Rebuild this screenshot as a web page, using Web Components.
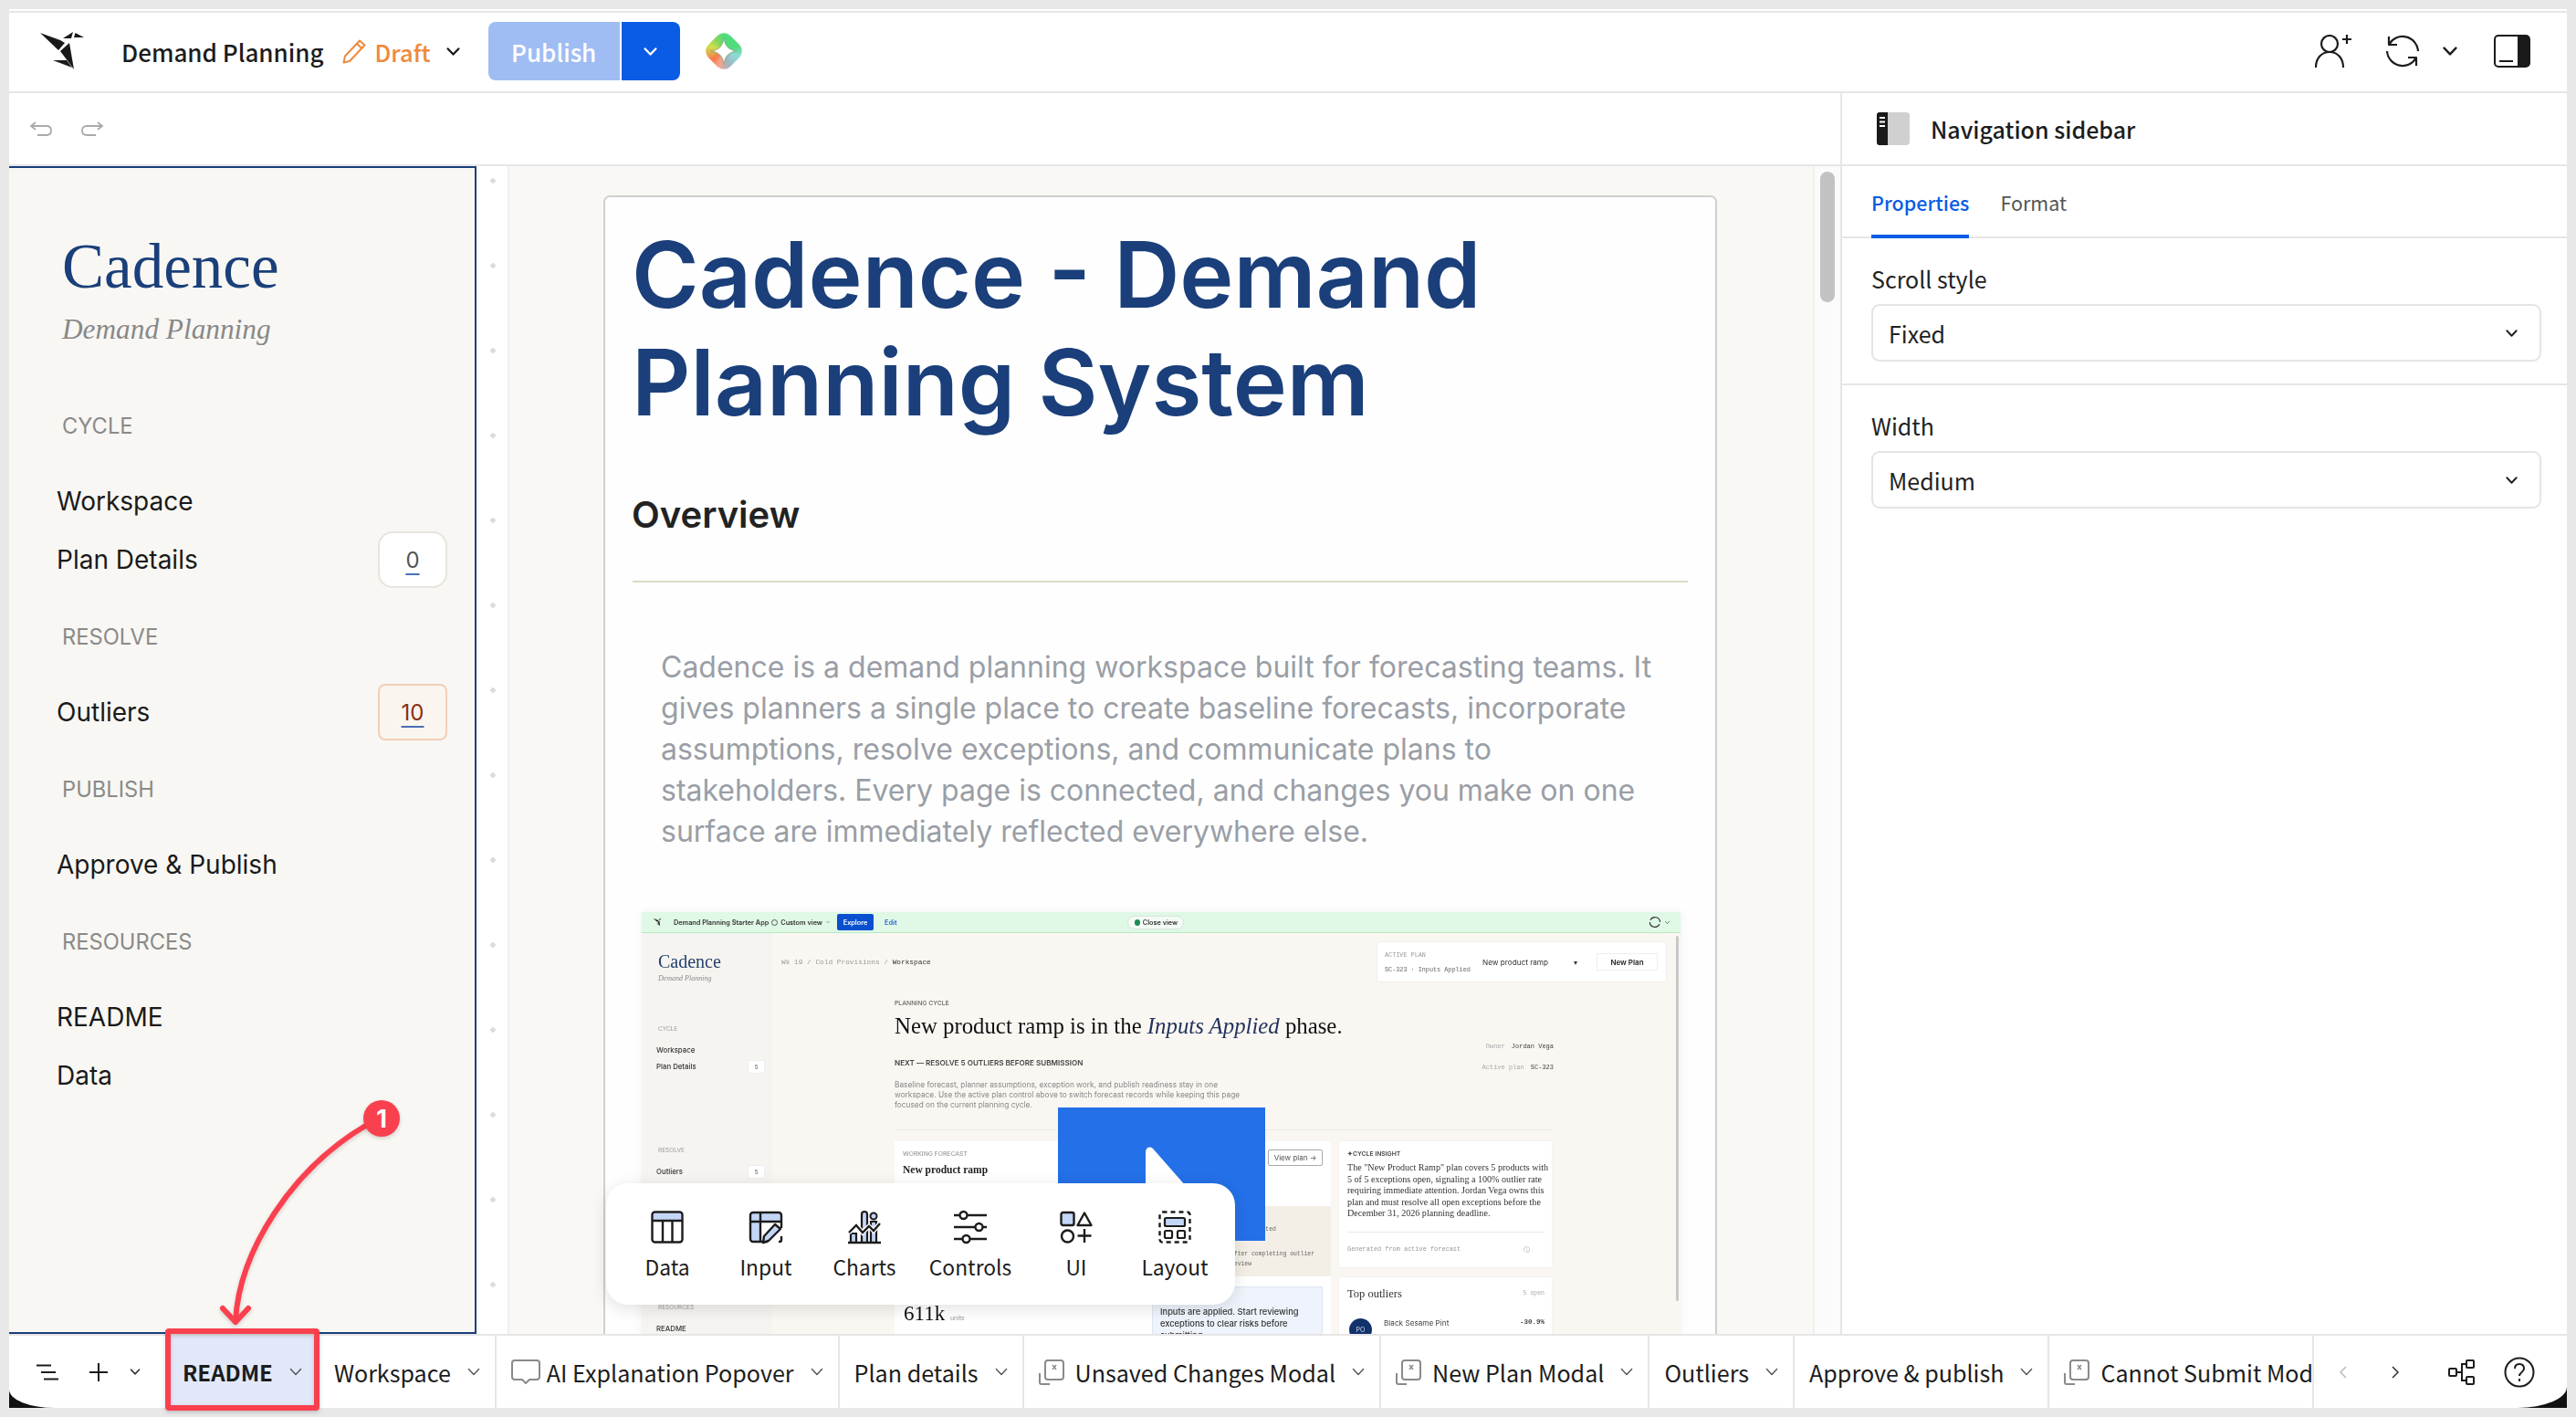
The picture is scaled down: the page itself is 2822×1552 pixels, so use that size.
<!DOCTYPE html>
<html>
<head>
<meta charset="utf-8">
<title>Demand Planning</title>
<style>
  html, body { margin: 0; height: 100%; }
  body {
    position: relative;
    width: 2822px;
    height: 1552px;
    overflow: hidden;
    background: #e8e8e8;
    font-family: "Noto Sans CJK SC", "Liberation Sans", sans-serif;
    color: #1c1c1c;
  }
  .frame { position: absolute; inset: 10px 10px 10px 10px; display: flex; flex-direction: column; }
  .work { flex: 1; display: flex; min-height: 0; }
  .left { width: 2006px; display: flex; flex-direction: column; border-right: 2px solid #e6e6e6; flex: none; }
</style>
</head>
<body>
<div class="frame">
  <top-bar></top-bar>
  <div class="work">
    <div class="left">
      <edit-toolbar></edit-toolbar>
      <work-canvas>
        <cadence-sidebar slot="sidebar">
          <nav-section label="CYCLE">
            <nav-item>Workspace</nav-item>
            <nav-item count="0">Plan Details</nav-item>
          </nav-section>
          <nav-section label="RESOLVE">
            <nav-item count="10" tone="warn">Outliers</nav-item>
          </nav-section>
          <nav-section label="PUBLISH">
            <nav-item>Approve &amp; Publish</nav-item>
          </nav-section>
          <nav-section label="RESOURCES">
            <nav-item>README</nav-item>
            <nav-item>Data</nav-item>
          </nav-section>
        </cadence-sidebar>
        <doc-page></doc-page>
        <element-toolbar slot="float"></element-toolbar>
      </work-canvas>
    </div>
    <prop-panel></prop-panel>
  </div>
  <page-bar></page-bar>
</div>
<tour-annotation></tour-annotation>

<script>
  const chevron = (w, c = '#1c1c1c', sw = 1.4) =>
    `<svg width="${w}" height="${Math.round(w * 0.62)}" viewBox="0 0 10 6.2" fill="none" stroke="${c}" stroke-width="${sw}" stroke-linecap="round" stroke-linejoin="round"><path d="M1 1l4 4.2L9 1"/></svg>`;

  function define(tag, render) {
    customElements.define(tag, class extends HTMLElement {
      connectedCallback() {
        if (this.shadowRoot) return;
        this.attachShadow({ mode: 'open' }).innerHTML = render(this);
      }
    });
  }

  define('top-bar', () => `
    <style>
      :host { display: flex; align-items: center; height: 88px; box-sizing: content-box; flex: none;
        background: #fff; border-top: 2px solid #fff; box-shadow: inset 0 2px 0 #e6e6e6; border-bottom: 2px solid #e6e6e6; padding-left: 26px; padding-right: 40px; }
      .logo { flex: none; width: 66px; height: 54px; }
      .title { font-size: 26px; font-weight: 500; margin-left: 31px; color: #1c1c1c; }
      .pencil { margin-left: 19px; flex: none; }
      .draft { font-size: 25.5px; font-weight: 500; color: #ee8a3c; margin-left: 9px; }
      .caret { margin-left: 17px; display: flex; }
      .publish { display: flex; height: 64px; margin-left: 31px; border-radius: 8px; overflow: hidden; }
      .publish b { width: 144px; background: #9fbdf3; color: #fff; font-weight: 500; font-size: 26px; display: flex; align-items: center; justify-content: center; }
      .publish i { width: 64px; margin-left: 2px; background: #0a5ce4; display: flex; align-items: center; justify-content: center; }
      .spark { position: relative; width: 40px; height: 40px; margin-left: 28px; flex: none; }
      .spark:before { content: ""; position: absolute; left: 3px; top: 3px; width: 34px; height: 34px; border-radius: 10px; transform: rotate(45deg);
        background: conic-gradient(from -45deg, #4fdc7c 0 20%, #8fdcd6 30%, #9fb4c4 45%, #f7a58a 55%, #f7784c 65%, #cfe04c 80%, #8bd65c 90%, #4fdc7c); filter: blur(.6px); }
      .spark svg { position: absolute; inset: 0; }
      .right { margin-left: auto; display: flex; align-items: center; }
    </style>
    <svg class="logo" viewBox="0 0 66 54" fill="#1a1a1a">
      <polygon points="8,7 30,15 35,18 28,26"/>
      <polygon points="30,27 40,18 45,47"/>
      <polygon points="33,13 44,6 42,13"/>
      <polygon points="46.5,7 56,12 45,12"/>
      <polygon points="22,37 37,37 43,45"/>
    </svg>
    <span class="title">Demand Planning</span>
    <svg class="pencil" width="28" height="28" viewBox="0 0 28 28" fill="none" stroke="#ee8a3c" stroke-width="2" stroke-linejoin="round"><path d="M20 2.500l5.500 5L9 25 2.500 26.500 4 19.500z"/><path d="M17 6l5.500 5"/></svg>
    <span class="draft">Draft</span>
    <span class="caret">${chevron(15, '#1c1c1c', 1.6)}</span>
    <div class="publish"><b>Publish</b><i>${chevron(15, '#fff', 1.6)}</i></div>
    <div class="spark"><svg viewBox="0 0 40 40"><path d="M20 5.500C21 14 26 19 34 20 26 21 21 26 20 34.500 19 26 14 21 6 20 14 19 19 14 20 5.500Z" fill="#fff" stroke="#6d8a5a" stroke-opacity=".45" stroke-width="1.500"/></svg></div>
    <div class="right">
      <svg width="40" height="36" viewBox="0 0 40 36" fill="none" stroke="#1c1c1c" stroke-width="2.200"><circle cx="16" cy="10" r="9"/><path d="M1 36c0-10 6-17 15-17s15 7 15 17"/><path d="M30 5h10M35 0v10"/></svg>
      <svg style="margin-left:38px" width="36" height="36" viewBox="0 0 36 36" fill="none" stroke="#1c1c1c" stroke-width="2.200" stroke-linejoin="round"><path d="M3 11A17 17 0 0 1 35 18"/><path d="M33 25A17 17 0 0 1 1 18"/><path d="M3 2v9h9"/><path d="M33 34v-9h-9"/></svg>
      <span style="margin-left:26px;display:flex">${chevron(16, '#1c1c1c', 1.500)}</span>
      <svg style="margin-left:40px" width="40" height="36" viewBox="0 0 40 36"><rect x="1" y="1" width="38" height="34" rx="4" fill="#fff" stroke="#1a1a1a" stroke-width="2"/><path d="M26 1h9a4 4 0 0 1 4 4v26a4 4 0 0 1-4 4h-9z" fill="#1a1a1a"/><path d="M6 29h15" stroke="#1a1a1a" stroke-width="2"/></svg>
    </div>`);

  define('edit-toolbar', () => `
    <style>
      :host { display: flex; align-items: center; gap: 30px; height: 78px; flex: none; background: #fff; border-bottom: 2px solid #e6e6e6; padding-left: 22px; }
      svg { display: block; }
    </style>
    <svg width="26" height="16" viewBox="0 0 26 16" fill="none" stroke="#aaa" stroke-width="1.800"><path d="M7 1L2 5l5 4"/><path d="M2 5h17c3.500 0 5 2 5 5s-1.500 5-5 5H9"/></svg>
    <svg width="26" height="16" viewBox="0 0 26 16" fill="none" stroke="#aaa" stroke-width="1.800"><path d="M19 1l5 4-5 4"/><path d="M24 5H7c-3.500 0-5 2-5 5s1.500 5 5 5h10"/></svg>`);

  define('work-canvas', () => `
    <style>
      :host { display: block; flex: 1; min-height: 0; }
      .row { position: relative; display: flex; height: 100%; }
      .dots { width: 34px; flex: none; background: #fff radial-gradient(circle at 18px 16px, #dcdcdc 2.5px, transparent 3px) 0 0 / 34px 93px repeat-y; border-right: 2px solid #efefef; }
      .canvas { width: 1428px; flex: none; overflow: hidden; background: #f9f8f4; }
      .track { flex: 1; background: #fbfbfb; border-left: 2px solid #efefef; padding: 6px 6px 0; box-sizing: border-box; }
      .thumb { height: 143px; border-radius: 8px; background: #c2c2c2; }
      .float { position: absolute; left: 654px; bottom: 32px; }
    </style>
    <div class="row">
      <slot name="sidebar"></slot>
      <div class="dots"></div>
      <div class="canvas"><slot></slot></div>
      <div class="track"><div class="thumb"></div></div>
      <div class="float"><slot name="float"></slot></div>
    </div>`);

  define('cadence-sidebar', () => `
    <style>
      :host { display: block; width: 512px; flex: none; box-sizing: border-box; background: #f8f7f3;
        border: solid #1a3f7a; border-width: 2px 2px 2px 0; padding: 68px 30px 0 52px; }
      h1 { margin: 0 0 0 6px; font: 400 69px/80px "Liberation Serif", serif; color: #1a3f7a; }
      p { margin: 9px 0 66px 6px; font: italic 400 31.300px/40px "Liberation Serif", serif; color: #888; }
    </style>
    <h1>Cadence</h1>
    <p>Demand Planning</p>
    <slot></slot>`);

  define('nav-section', (el) => `
    <style>
      :host { display: block; }
      .label { margin: 33px 0 30px 6px; font: 400 23.700px/40px Inter, sans-serif; color: #8a8a8a; }
    </style>
    <div class="label">${el.getAttribute('label')}</div>
    <slot></slot>`);

  define('nav-item', (el) => {
    const count = el.getAttribute('count');
    const warn = el.getAttribute('tone') === 'warn';
    return `
    <style>
      :host { display: flex; align-items: center; justify-content: space-between; height: 64px; font: 400 28px Inter, sans-serif; color: #1a1a1a; }
      .badge { width: 76px; height: 62px; box-sizing: border-box; display: flex; align-items: center; justify-content: center; font-size: 24px;
        background: ${warn ? '#fbf5ef' : '#fff'}; color: ${warn ? '#8a2f10' : '#555'}; border: 2px solid ${warn ? '#f2cfb8' : '#e8e4de'}; border-radius: ${warn ? 8 : 16}px; }
      .badge span { text-decoration: underline; text-decoration-color: #4a6fb5; text-underline-offset: 6px; text-decoration-thickness: 2px; }
    </style>
    <slot></slot>
    ${count !== null ? `<div class="badge"><span>${count}</span></div>` : ''}`;
  });

  define('doc-page', () => `
    <style>
      :host { display: block; margin: 32px 0 0 103px; width: 1220px; height: 1400px; box-sizing: border-box; background: #fefefe; border: 2px solid #cfcfcf; border-radius: 7px; padding-left: 30px; overflow: hidden; }
      h1 { margin: 26px 0 0 -1px; font: 600 100px/118px Inter, sans-serif; color: #1a3f7a; }
      h2 { margin: 64px 0 0 -1px; font: 600 40px/44px Inter, sans-serif; color: #222; }
      hr { margin: 50px 30px 0 0; border: 0; height: 2px; background: #dcdac6; }
      p { margin: 70px 60px 0 31px; font: 400 32px/45px Inter, sans-serif; color: #9a9ea6; }
      video-thumb { margin: 66px 0 0 10px; }
    </style>
    <h1>Cadence - Demand<br>Planning System</h1>
    <h2>Overview</h2>
    <hr>
    <p>Cadence is a demand planning workspace built for forecasting teams. It gives planners a single place to create baseline forecasts, incorporate assumptions, resolve exceptions, and communicate plans to stakeholders. Every page is connected, and changes you make on one surface are immediately reflected everywhere else.</p>
    <video-thumb></video-thumb>`);

  define('video-thumb', () => `
    <style>
      :host { display: block; position: relative; width: 1138px; height: 470px; box-shadow: 0 0 10px rgba(0,0,0,.06); font: 400 8px Inter, sans-serif; color: #333; }
      .shot { filter: blur(.35px); height: 100%; display: flex; flex-direction: column; }
      .mono { font-family: "Liberation Mono", monospace; }
      .serif { font-family: "Liberation Serif", serif; }
      .bar { height: 22px; flex: none; display: flex; align-items: center; background: #e0f8e6; border-bottom: 1.5px solid #b5e8c2; padding-left: 12px; font-weight: 600; font-size: 7.3px; }
      .bar .ex { margin-left: 8px; width: 40px; height: 18px; background: #0a4fd0; color: #fff; border-radius: 2px; display: flex; align-items: center; justify-content: center; }
      .bar .ed { margin-left: 12px; color: #2a66d0; }
      .bar .close { margin-left: 253px; height: 15px; width: 62px; border-radius: 8px; background: #f4fbf5; border: 1px solid #d6e6da; box-sizing: border-box; display: flex; align-items: center; justify-content: center; gap: 3px; }
      .bar .close i { width: 6px; height: 7px; border-radius: 3px; background: #1f8a55; }
      .bar .sync { margin-left: auto; margin-right: 12px; display: flex; align-items: center; gap: 5px; }
      .body { flex: 1; display: flex; background: #faf7f3; min-height: 0; }
      aside { width: 143px; flex: none; background: #f6f4f0; padding: 20px 0 0 16px; box-sizing: border-box; }
      aside .c { font: 400 20px/22px "Liberation Serif", serif; color: #24406f; margin-left: 2px; }
      aside .s { font: italic 400 8px/12px "Liberation Serif", serif; color: #888; margin: 2px 0 0 2px; }
      aside .l { color: #999; font-size: 6.500px; line-height: 10px; margin-left: 2px; }
      aside .i { height: 18px; line-height: 18px; font-weight: 500; font-size: 7.800px; display: flex; justify-content: space-between; align-items: center; padding-right: 8px; }
      aside .n { width: 19px; height: 15px; background: #fff; border: 1px solid #eee; box-sizing: border-box; border-radius: 2px; text-align: center; line-height: 13px; font-size: 6px; color: #666; }
      main { flex: 1; min-width: 0; position: relative; }
      .head { display: flex; justify-content: space-between; align-items: flex-start; padding: 10px 16px 0 10px; height: 43px; }
      .crumb { margin-top: 17px; color: #999; font-size: 7.800px; line-height: 10px; }
      .crumb b { color: #333; font-weight: 400; }
      .plan { width: 316px; height: 43px; box-sizing: border-box; background: #fff; box-shadow: 0 0 2px rgba(0,0,0,.12); border-radius: 2px; display: flex; align-items: center; padding: 0 9px 0 8px; }
      .plan .a { width: 107px; font-size: 6.800px; line-height: 16px; color: #666; }
      .plan .a div:first-child { color: #999; }
      .plan .sel { width: 125px; font-size: 8.200px; display: flex; justify-content: space-between; padding-right: 21px; box-sizing: border-box; }
      .plan .btn { width: 67px; height: 19px; border: 1px solid #eee; box-sizing: border-box; display: flex; align-items: center; justify-content: center; font-weight: 600; font-size: 8px; color: #222; }
      .content { margin: 19px 0 0 134px; width: 722px; }
      .hero { display: flex; justify-content: space-between; height: 143px; border-bottom: 1px solid #efece6; }
      .eyebrow { font-size: 6.800px; line-height: 10px; font-weight: 500; color: #666; }
      .headline { font: 400 24.800px/28px "Liberation Serif", serif; color: #111; margin-top: 6px; white-space: nowrap; }
      .headline em { color: #22335c; }
      .next { margin-top: 20px; font-size: 8.100px; line-height: 12px; font-weight: 600; color: #444; white-space: nowrap; }
      .desc { margin-top: 13px; font-size: 8.300px; line-height: 11px; color: #888; white-space: nowrap; }
      .meta { padding-top: 47px; text-align: right; font-size: 7px; line-height: 10px; color: #444; }
      .meta span { color: #aaa; margin-right: 7px; }
      .meta div + div { margin-top: 13px; }
      .cards { display: flex; gap: 9px; margin-top: 12px; }
      .fc { width: 478px; flex: none; background: #fff; }
      .fc .top { height: 71px; display: flex; justify-content: space-between; padding: 9px 9px 0 9px; box-sizing: border-box; }
      .fc .wf { font-size: 6.800px; line-height: 10px; color: #888; }
      .fc .np { font: 600 11.500px/14px "Liberation Serif", serif; margin-top: 5px; color: #222; }
      .fc .view { width: 60px; height: 18px; border: 1px solid #aaa; border-radius: 2px; box-sizing: border-box; display: flex; align-items: center; justify-content: center; font-size: 8px; color: #555; }
      .fc .mid { height: 77px; background: #f3efe6; padding: 20px 0 0 368px; box-sizing: border-box; font-size: 6.400px; line-height: 11px; color: #666; white-space: nowrap; }
      .fc .mid .go { color: #3a66b0; margin-bottom: 5px; }
      .fc .low { display: flex; justify-content: space-between; padding: 11px 9px 0 10px; }
      .fc .big { font: 400 23px/28px "Liberation Serif", serif; margin-top: 16px; color: #111; }
      .fc .big small { font: 400 7px Inter, sans-serif; color: #999; }
      .fc .tip { width: 187px; height: 70px; box-sizing: border-box; background: #eef3fc; border: 1px solid #dde5f3; padding: 20px 8px 0 8px; font-size: 9.300px; line-height: 13px; font-weight: 500; color: #333; }
      .side { width: 233px; flex: none; }
      .ins { height: 138px; box-sizing: border-box; background: #fff; padding: 9px 9px 0; box-shadow: 0 0 1px rgba(0,0,0,.12); }
      .ins .t { font-size: 6.800px; line-height: 10px; font-weight: 600; color: #444; }
      .ins .x { font: 400 10.100px/12.500px "Liberation Serif", serif; color: #333; margin-top: 4px; white-space: nowrap; }
      .ins .g { margin-top: 13px; border-top: 1px solid #e8e8e8; padding-top: 14px; display: flex; justify-content: space-between; font-size: 6.900px; color: #999; padding-right: 15px; }
      .top5 { margin-top: 11px; height: 100px; background: #fff; box-shadow: 0 0 1px rgba(0,0,0,.12); padding: 10px 8px 0 9px; box-sizing: border-box; }
      .top5 .h { display: flex; justify-content: space-between; align-items: center; font: 400 12.500px/16px "Liberation Serif", serif; color: #333; }
      .top5 .h span { font-family: "Liberation Mono", monospace; font-size: 6.500px; color: #aaa; }
      .top5 .r { display: flex; align-items: flex-start; margin-top: 19px; font-size: 8.200px; color: #444; }
      .top5 .av { width: 25px; height: 25px; border-radius: 50%; background: #12326c; color: #dde; font-size: 7px; display: flex; align-items: center; justify-content: center; margin: 0 13px 0 2px; flex: none; }
      .top5 .r b { margin-left: auto; font: 700 7.500px "Liberation Mono", monospace; }
      .scroll { position: absolute; right: 2px; top: 3px; width: 3px; height: 400px; background: #c8c8c8; border-radius: 2px; }
      .play { position: absolute; left: 456px; top: 214px; width: 227px; height: 146px; background: #2470e8; }
      .play svg { position: absolute; left: 96px; top: 43px; }
    </style>
    <div class="shot">
      <div class="bar">
        <svg width="12" height="12" viewBox="0 0 66 54" fill="#1a1a1a"><polygon points="2,4 30,15 35,18 28,26"/><polygon points="30,27 40,18 45,52"/><polygon points="33,13 50,3 46,13"/><polygon points="22,37 37,37 43,45"/></svg>
        <span style="margin-left:11px">Demand Planning Starter App</span>
        <span style="margin-left:3px;width:7px;height:7px;border:1px solid #555;border-radius:50%;box-sizing:border-box"></span>
        <span style="margin-left:3px">Custom view</span>
        <span style="margin-left:4px;display:flex">${chevron(4, '#444', 1.5)}</span>
        <span class="ex">Explore</span><span class="ed">Edit</span>
        <span class="close"><i></i>Close view</span>
        <span class="sync"><svg width="12" height="12" viewBox="0 0 36 36" fill="none" stroke="#333" stroke-width="3.500"><path d="M3 11A17 17 0 0 1 35 18"/><path d="M33 25A17 17 0 0 1 1 18"/></svg>${chevron(5, '#444', 1.5)}</span>
      </div>
      <div class="body">
        <aside>
          <div class="c">Cadence</div>
          <div class="s">Demand Planning</div>
          <div class="l" style="margin-top:44px">CYCLE</div>
          <div class="i" style="margin-top:9px">Workspace</div>
          <div class="i">Plan Details <span class="n">5</span></div>
          <div class="l" style="margin-top:78px">RESOLVE</div>
          <div class="i" style="margin-top:9px">Outliers <span class="n">5</span></div>
          <div class="l" style="margin-top:43px">PUBLISH</div>
          <div class="i" style="margin-top:9px">Approve &amp; Publish</div>
          <div class="l" style="margin-top:55px">RESOURCES</div>
          <div class="i" style="margin-top:9px">README</div>
        </aside>
        <main>
          <div class="head">
            <div class="crumb mono">Wk 19 / Cold Provisions / <b>Workspace</b></div>
            <div class="plan">
              <div class="a mono"><div>ACTIVE PLAN</div><div>SC-323 · Inputs Applied</div></div>
              <div class="sel"><span>New product ramp</span><span>▾</span></div>
              <div class="btn">New Plan</div>
            </div>
          </div>
          <div class="content">
            <div class="hero">
              <div>
                <div class="eyebrow">PLANNING CYCLE</div>
                <div class="headline">New product ramp is in the <em>Inputs Applied</em> phase.</div>
                <div class="next">NEXT — RESOLVE 5 OUTLIERS BEFORE SUBMISSION</div>
                <div class="desc">Baseline forecast, planner assumptions, exception work, and publish readiness stay in one<br>workspace. Use the active plan control above to switch forecast records while keeping this page<br>focused on the current planning cycle.</div>
              </div>
              <div class="meta mono"><div><span>Owner</span>Jordan Vega</div><div><span>Active plan</span>SC-323</div></div>
            </div>
            <div class="cards">
              <div class="fc">
                <div class="top"><div><div class="wf">WORKING FORECAST</div><div class="np">New product ramp</div></div><div class="view">View plan →</div></div>
                <div class="mid mono"><div>Not submitted</div><div class="go">Submit</div><div>after completing outlier</div><div>review</div></div>
                <div class="low"><div class="big">611k <small>units</small></div><div class="tip">Inputs are applied. Start reviewing exceptions to clear risks before submitting.</div></div>
              </div>
              <div class="side">
                <div class="ins">
                  <div class="t">✦CYCLE INSIGHT</div>
                  <div class="x">The "New Product Ramp" plan covers 5 products with<br>5 of 5 exceptions open, signaling a 100% outlier rate<br>requiring immediate attention. Jordan Vega owns this<br>plan and must resolve all open exceptions before the<br>December 31, 2026 planning deadline.</div>
                  <div class="g mono"><span>Generated from active forecast</span><span>ⓘ</span></div>
                </div>
                <div class="top5">
                  <div class="h">Top outliers <span>5 open</span></div>
                  <div class="r"><div class="av">PO</div><span>Black Sesame Pint</span><b>-30.9%</b></div>
                </div>
              </div>
            </div>
          </div>
          <div class="scroll"></div>
        </main>
      </div>
    </div>
    <div class="play"><svg width="46" height="96" viewBox="0 0 46 96"><path d="M0 6C0 1 4-1 8 2L44 43C47 46 47 50 44 53L8 94C4 97 0 95 0 90Z" fill="#fff"/></svg></div>`);

  define('element-toolbar', () => {
    const blue = '#c3d6f7', k = '#1c1c1c';
    const tools = [
      ['Data', 108, `<rect x="1.500" y="1.500" width="33" height="33" rx="3" fill="#fff" stroke="${k}" stroke-width="2.400"/><path d="M3 3h30v8H3z" fill="${blue}"/><path d="M2 11h32M13 11v23M23.500 11v23" stroke="${k}" stroke-width="2.400"/>`],
      ['Input', 108, `<path d="M4 2h28a3 3 0 0 1 3 3v7H12v22H4a3 3 0 0 1-3-3V5a3 3 0 0 1 3-3z" fill="${blue}"/><path d="M20 34H4a3 3 0 0 1-3-3V5a3 3 0 0 1 3-3h28a3 3 0 0 1 3 3v14M32 34h1a2 2 0 0 0 2-2v-4M2 12h33M12 2v32" fill="none" stroke="${k}" stroke-width="2.400"/><path d="M15 35l1-7 12-13 6 5-13 13z" fill="${blue}" stroke="${k}" stroke-width="2.400" stroke-linejoin="round"/>`],
      ['Charts', 108, `<path d="M15 34V4a3 3 0 0 1 6 0v30M3 34v-9h6v9M25 34V12h6v22" fill="${blue}" stroke="${k}" stroke-width="2.200"/><path d="M0 35h36" stroke="${k}" stroke-width="2.400"/><path d="M1 24l8-8 7 8 7-7 5 5 7-8" fill="none" stroke="#fff" stroke-width="5"/><path d="M1 24l8-8 7 8 7-7 5 5 7-8" fill="none" stroke="${k}" stroke-width="2.400"/><circle cx="28" cy="6" r="3.500" fill="${blue}" stroke="${k}" stroke-width="2"/>`],
      ['Controls', 124, `<g fill="#fff" stroke="${k}" stroke-width="2.400"><path d="M0 5h6M15 5h21M0 18h23M32 18h4M0 31h9M18 31h18"/><circle cx="10.500" cy="5" r="4"/><circle cx="27.500" cy="18" r="4"/><circle cx="13.500" cy="31" r="4"/></g>`],
      ['UI', 108, `<rect x="1.500" y="2" width="14" height="14" rx="2" fill="${blue}" stroke="${k}" stroke-width="2.400"/><path d="M27 2.500l7.500 13.500h-15z" fill="none" stroke="${k}" stroke-width="2.400" stroke-linejoin="round"/><circle cx="8.500" cy="28" r="6.500" fill="none" stroke="${k}" stroke-width="2.400"/><path d="M27 20v15M19.500 27.500h15" stroke="${k}" stroke-width="2.400"/>`],
      ['Layout', 108, `<rect x="1.500" y="1.500" width="33" height="33" rx="3" fill="none" stroke="${k}" stroke-width="2.400" stroke-dasharray="5 4"/><rect x="7" y="8" width="22" height="9" rx="1.500" fill="${blue}" stroke="${k}" stroke-width="2.200"/><rect x="7" y="22" width="8" height="8" rx="1.500" fill="none" stroke="${k}" stroke-width="2.200"/><rect x="21" y="22" width="8" height="8" rx="1.500" fill="none" stroke="${k}" stroke-width="2.200"/>`],
    ];
    return `
    <style>
      :host { display: flex; height: 133px; padding: 0 12px 0 13px; background: #fff; border-radius: 24px; box-shadow: 0 4px 18px rgba(0,0,0,.12); }
      div { display: flex; flex-direction: column; align-items: center; padding-top: 30px; box-sizing: border-box; }
      span { font-size: 22.800px; line-height: 32px; margin-top: 10px; color: #1c1c1c; }
      svg { display: block; flex: none; }
    </style>
    ${tools.map(([name, w, icon]) => `<div style="width:${w}px"><svg width="36" height="36" viewBox="0 0 36 36" overflow="visible">${icon}</svg><span>${name}</span></div>`).join('')}`;
  });

  define('prop-panel', () => `
    <style>
      :host { flex: 1; display: block; background: #fff; min-width: 0; }
      .head { height: 78px; display: flex; align-items: center; padding-left: 38px; border-bottom: 2px solid #e6e6e6; font-size: 25px; font-weight: 500; }
      .head svg { margin-right: 23px; }
      .tabs { height: 77px; display: flex; gap: 34px; padding-left: 32px; border-bottom: 2px solid #e6e6e6; font-size: 21.500px; }
      .tabs span { height: 79px; line-height: 80px; box-sizing: border-box; color: #555; }
      .tabs .on { color: #0a5ce4; font-weight: 500; border-bottom: 4px solid #0a5ce4; }
      section { padding: 24px 28px 24px 32px; border-bottom: 2px solid #e6e6e6; }
      section:last-child { border: 0; }
      label { display: block; font-size: 25px; line-height: 40px; margin-bottom: 8px; color: #222; }
      .sel { display: flex; align-items: center; justify-content: space-between; height: 63px; box-sizing: border-box; border: 2px solid #e4e4e4; border-radius: 9px; padding: 0 24px 0 17px; font-size: 25px; color: #222; }
    </style>
    <div class="head">
      <svg width="36" height="36" viewBox="0 0 36 36"><rect width="36" height="36" rx="4" fill="#d0d0d0"/><path d="M3 0h9v36H3a3 3 0 0 1-3-3V3a3 3 0 0 1 3-3z" fill="#1a1a1a"/><path d="M3 6h6M3 10.500h6M3 15h6" stroke="#fff" stroke-width="2"/></svg>
      Navigation sidebar
    </div>
    <div class="tabs"><span class="on">Properties</span><span>Format</span></div>
    <section><label>Scroll style</label><div class="sel">Fixed ${chevron(13, '#222', 1.500)}</div></section>
    <section><label>Width</label><div class="sel">Medium ${chevron(13, '#222', 1.500)}</div></section>`);

  define('page-tab', (el) => {
    const icon = el.getAttribute('icon');
    const on = el.hasAttribute('active');
    const icons = {
      chat: `<svg style="margin-right:7px" width="32" height="27" viewBox="0 0 32 27" fill="none" stroke="#8a8a8a" stroke-width="2" stroke-linejoin="round"><path d="M4 1h24a3 3 0 0 1 3 3v15a3 3 0 0 1-3 3h-8l-4 4-4-4H4a3 3 0 0 1-3-3V4a3 3 0 0 1 3-3z"/></svg>`,
      modal: `<svg style="margin-right:12px" width="28" height="28" viewBox="0 0 28 28" fill="none" stroke="#8a8a8a" stroke-width="2"><rect x="7" y="1" width="20" height="21" rx="3"/><path d="M1 15v10a2 2 0 0 0 2 2h9"/><path d="M15 6l4 5M19 6l-4 5" stroke-width="1.500"/></svg>`,
    };
    return `
    <style>
      :host { display: flex; align-items: center; flex: none; height: 100%; box-sizing: border-box; padding: 0 ${on ? '19px' : '16px'}; white-space: nowrap;
        font-size: ${on ? 24 : 25.100}px; ${on ? 'background:#e2e8fa;font-weight:600;' : 'border-right: 2px solid #e6e6e6;'} }
      .c { margin-left: 18px; display: flex; }
      svg { display: block; flex: none; }
    </style>
    ${icon ? icons[icon] : ''}<slot></slot><span class="c">${chevron(14, '#555', 1)}</span>`;
  });

  define('page-bar', () => `
    <style>
      :host { display: block; height: 81px; flex: none; box-sizing: border-box; background: #111; border-top: 2px solid #e6e6e6; }
      .bar { display: flex; height: 100%; background: #fff; border-radius: 0 0 54px 50px / 0 0 23px 20px; }
      .add { width: 171px; flex: none; display: flex; align-items: center; padding-left: 30px; box-sizing: border-box; }
      .tabs { width: 2354px; flex: none; display: flex; overflow: hidden; border-right: 2px solid #e6e6e6; box-sizing: border-box; }
      .end { flex: 1; display: flex; align-items: center; }
      svg { display: block; flex: none; }
    </style>
    <div class="bar">
      <div class="add">
        <svg width="24" height="18" viewBox="0 0 24 18" stroke="#1c1c1c" stroke-width="2"><path d="M0 1.500h16M5 9h16M8 16.500h16"/></svg>
        <svg style="margin-left:34px" width="20" height="20" viewBox="0 0 20 20" stroke="#1c1c1c" stroke-width="2"><path d="M10 0v20M0 10h20"/></svg>
        <span style="margin-left:24px;display:flex">${chevron(12, '#333', 1.300)}</span>
      </div>
      <div class="tabs">
        <page-tab active>README</page-tab>
        <page-tab>Workspace</page-tab>
        <page-tab icon="chat">AI Explanation Popover</page-tab>
        <page-tab>Plan details</page-tab>
        <page-tab icon="modal">Unsaved Changes Modal</page-tab>
        <page-tab icon="modal">New Plan Modal</page-tab>
        <page-tab>Outliers</page-tab>
        <page-tab>Approve &amp; publish</page-tab>
        <page-tab icon="modal">Cannot Submit Modal</page-tab>
      </div>
      <div class="end">
        <svg style="margin-left:27px" width="10" height="16" viewBox="0 0 10 16" fill="none" stroke="#bbb" stroke-width="1.500"><path d="M8 2L2 8l6 6"/></svg>
        <svg style="margin-left:47px" width="10" height="16" viewBox="0 0 10 16" fill="none" stroke="#333" stroke-width="1.500"><path d="M2 2l6 6-6 6"/></svg>
        <svg style="margin-left:53px" width="29" height="28" viewBox="0 0 29 28" fill="none" stroke="#1c1c1c" stroke-width="2"><rect x="1" y="10" width="8" height="8" rx="1"/><rect x="20" y="1" width="8" height="8" rx="1"/><rect x="20" y="19" width="8" height="8" rx="1"/><path d="M9 14h6M20 5h-5v18h5"/></svg>
        <svg style="margin-left:32px" width="34" height="34" viewBox="0 0 34 34" fill="none" stroke="#1c1c1c" stroke-width="2"><circle cx="17" cy="17" r="15.500"/><path d="M12 13c0-3 2-5 5-5s5 2 5 5c0 4-5 4-5 8"/><path d="M17 24v3"/></svg>
      </div>
    </div>`);

  define('tour-annotation', () => `
    <style>
      :host { position: absolute; inset: 0; pointer-events: none; display: block; }
      svg { display: block; }
      text { font: 700 27px Inter, sans-serif; fill: #fff; }
    </style>
    <svg width="2822" height="1552" viewBox="0 0 2822 1552">
      <defs><filter id="s" x="-20%" y="-20%" width="140%" height="140%"><feDropShadow dx="0" dy="2" stdDeviation="2" flood-opacity=".18"/></filter></defs>
      <g filter="url(#s)" fill="none" stroke="#f9404f" stroke-width="6" stroke-linecap="round" stroke-linejoin="round">
        <rect x="184" y="1458" width="163" height="84" rx="1"/>
        <path d="M402 1232C320 1280 262 1370 258 1447"/>
        <path d="M244 1433l14 15 14-15"/>
      </g>
      <circle cx="418" cy="1225" r="20" fill="#f9404f" filter="url(#s)"/>
      <text x="418" y="1235" text-anchor="middle">1</text>
    </svg>`);
</script>
</body>
</html>
